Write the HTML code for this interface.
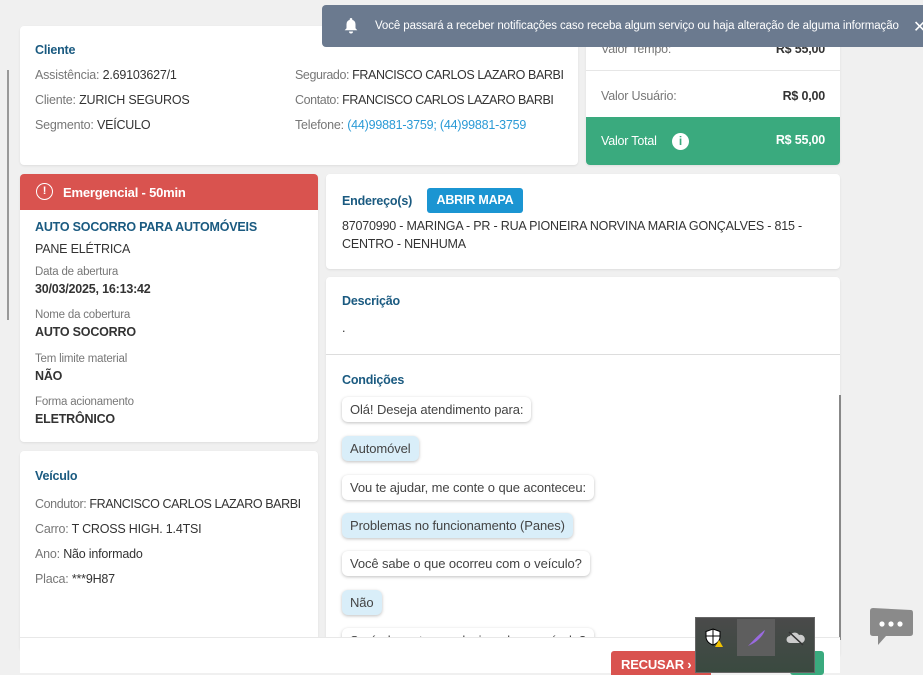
<!DOCTYPE html>
<html><head><meta charset="utf-8"><style>
*{box-sizing:border-box;margin:0;padding:0}
body{width:923px;height:673px;overflow:hidden;background:#f0f0f0;font-family:"Liberation Sans",sans-serif;font-size:12.5px;color:#444;position:relative;letter-spacing:-0.2px}
.card{position:absolute;background:#fff;border-radius:4px;box-shadow:0 1px 2px rgba(0,0,0,.08)}
.t{position:absolute;white-space:nowrap}
.h{color:#1a5a80;font-weight:bold;font-size:12.5px}
.lbl{color:#777}
.dark{color:#333}
.small{font-size:11.5px;color:#777}
.b{font-weight:bold;color:#333}
.bub{position:absolute;left:16px;padding:5px 8px;border-radius:6px;background:#fff;box-shadow:0 1px 3px rgba(0,0,0,.25);color:#444;white-space:nowrap;font-size:13px;letter-spacing:-0.1px}
.bub.u{background:#d9eef9}
</style></head><body>
<div style="position:absolute;left:7px;top:70px;width:2px;height:250px;background:#999"></div>

<div class="card" style="left:20px;top:26px;width:558px;height:139px">
 <div class="t h" style="left:15px;top:17px">Cliente</div>
 <div class="t" style="left:15px;top:42px"><span class="lbl">Assistência:</span> <span class="dark">2.69103627/1</span></div>
 <div class="t" style="left:15px;top:67px"><span class="lbl">Cliente:</span> <span class="dark">ZURICH SEGUROS</span></div>
 <div class="t" style="left:15px;top:92px"><span class="lbl">Segmento:</span> <span class="dark">VEÍCULO</span></div>
 <div class="t" style="left:275px;top:42px;letter-spacing:-0.4px"><span class="lbl">Segurado:</span> <span class="dark">FRANCISCO CARLOS LAZARO BARBI</span></div>
 <div class="t" style="left:275px;top:67px;letter-spacing:-0.4px"><span class="lbl">Contato:</span> <span class="dark">FRANCISCO CARLOS LAZARO BARBI</span></div>
 <div class="t" style="left:275px;top:92px"><span class="lbl">Telefone:</span> <span style="color:#2a9ad6">(44)99881-3759; (44)99881-3759</span></div>
</div>

<div class="card" style="left:586px;top:26px;width:254px;height:139px;overflow:hidden">
 <div class="t lbl" style="left:15px;top:16px">Valor Tempo:</div>
 <div class="t b" style="right:15px;top:16px">R$ 55,00</div>
 <div style="position:absolute;left:0;top:44px;width:100%;height:1px;background:#e6e6e6"></div>
 <div class="t lbl" style="left:15px;top:63px">Valor Usuário:</div>
 <div class="t b" style="right:15px;top:63px">R$ 0,00</div>
 <div style="position:absolute;left:0;top:91px;width:100%;height:48px;background:#3aaa7e"></div>
 <div class="t" style="left:15px;top:108px;color:#fff">Valor Total</div>
 <div style="position:absolute;left:86px;top:107px;width:17px;height:17px;border-radius:50%;background:#fff;color:#3aaa7e;font-weight:bold;font-size:12px;text-align:center;line-height:17px">i</div>
 <div class="t" style="right:15px;top:107px;color:#fff;font-weight:bold">R$ 55,00</div>
</div>

<div style="position:absolute;left:322px;top:5px;width:601px;height:42px;background:#6b7a8f;border-radius:4px 0 0 4px"></div>
<svg style="position:absolute;left:344px;top:17px" width="14" height="17" viewBox="0 0 14 17"><path d="M7 1a1.3 1.3 0 0 1 1.3 1.3v.6A4.5 4.5 0 0 1 11.5 7.3v4l1.8 2H.7l1.8-2v-4A4.5 4.5 0 0 1 5.7 2.9v-.6A1.3 1.3 0 0 1 7 1z M5 14.5h4a2 2 0 0 1-4 0z" fill="#fff"/></svg>
<div class="t" style="left:375px;top:20px;color:#fff;font-size:11.5px;letter-spacing:-0.1px">Você passará a receber notificações caso receba algum serviço ou haja alteração de alguma informação</div>
<div class="t" style="left:913px;top:17px;color:#fff;font-size:16px">✕</div>

<div class="card" style="left:20px;top:174px;width:298px;height:268px;overflow:hidden">
 <div style="position:absolute;left:0;top:0;width:100%;height:36px;background:#d9534f"></div>
 <div style="position:absolute;left:16px;top:9px;width:17px;height:17px;border:1.6px solid #fff;border-radius:50%;color:#fff;font-size:11px;font-weight:bold;text-align:center;line-height:14px">!</div>
 <div class="t" style="left:43px;top:11px;color:#fff;font-weight:bold;font-size:13px">Emergencial - 50min</div>
 <div class="t h" style="left:15px;top:46px">AUTO SOCORRO PARA AUTOMÓVEIS</div>
 <div class="t dark" style="left:15px;top:68px">PANE ELÉTRICA</div>
 <div class="t small" style="left:15px;top:92px">Data de abertura</div>
 <div class="t b" style="left:15px;top:108px">30/03/2025, 16:13:42</div>
 <div class="t small" style="left:15px;top:135px">Nome da cobertura</div>
 <div class="t b" style="left:15px;top:151px">AUTO SOCORRO</div>
 <div class="t small" style="left:15px;top:179px">Tem limite material</div>
 <div class="t b" style="left:15px;top:195px">NÃO</div>
 <div class="t small" style="left:15px;top:222px">Forma acionamento</div>
 <div class="t b" style="left:15px;top:238px">ELETRÔNICO</div>
</div>

<div class="card" style="left:20px;top:451px;width:298px;height:200px">
 <div class="t h" style="left:15px;top:18px">Veículo</div>
 <div class="t" style="left:15px;top:46px;letter-spacing:-0.4px"><span class="lbl">Condutor:</span> <span class="dark">FRANCISCO CARLOS LAZARO BARBI</span></div>
 <div class="t" style="left:15px;top:71px"><span class="lbl">Carro:</span> <span class="dark">T CROSS HIGH. 1.4TSI</span></div>
 <div class="t" style="left:15px;top:96px"><span class="lbl">Ano:</span> <span class="dark">Não informado</span></div>
 <div class="t" style="left:15px;top:121px"><span class="lbl">Placa:</span> <span class="dark">***9H87</span></div>
</div>

<div class="card" style="left:326px;top:174px;width:514px;height:95px">
 <div class="t h" style="left:16px;top:20px">Endereço(s)</div>
 <div style="position:absolute;left:101px;top:14px;width:96px;height:25px;background:#1b95d2;border-radius:3px;color:#fff;font-weight:bold;font-size:12.5px;text-align:center;line-height:25px">ABRIR MAPA</div>
 <div class="t dark" style="left:16px;top:45px">87070990 - MARINGA - PR - RUA PIONEIRA NORVINA MARIA GONÇALVES - 815 -</div>
 <div class="t dark" style="left:16px;top:63px">CENTRO - NENHUMA</div>
</div>

<div class="card" style="left:326px;top:277px;width:514px;height:380px;overflow:hidden">
 <div class="t h" style="left:16px;top:17px">Descrição</div>
 <div class="t dark" style="left:16px;top:44px">.</div>
 <div style="position:absolute;left:0;top:77px;width:100%;height:1px;background:#ddd"></div>
 <div class="t h" style="left:16px;top:96px">Condições</div>
 <div class="bub" style="top:120px">Olá! Deseja atendimento para:</div>
 <div class="bub u" style="top:159px">Automóvel</div>
 <div class="bub" style="top:198px">Vou te ajudar, me conte o que aconteceu:</div>
 <div class="bub u" style="top:236px">Problemas no funcionamento (Panes)</div>
 <div class="bub" style="top:274px">Você sabe o que ocorreu com o veículo?</div>
 <div class="bub u" style="top:313px">Não</div>
 <div class="bub" style="top:351px">Será algum tema relacionado ao veículo?</div>
</div>
<div style="position:absolute;left:839px;top:395px;width:2px;height:245px;background:#888"></div>

<div style="position:absolute;left:20px;top:637px;width:820px;height:36px;background:#fff;border-top:1px solid #e8e8e8"></div>
<div style="position:absolute;left:611px;top:651px;width:100px;height:24px;background:#d9534f;border-radius:3px 3px 0 0"></div>
<div class="t" style="left:621px;top:657px;color:#fff;font-weight:bold;font-size:13px">RECUSAR ›</div>
<div style="position:absolute;left:790px;top:651px;width:34px;height:24px;background:#3aaa7e;border-radius:3px"></div>

<div style="position:absolute;left:695px;top:617px;width:120px;height:56px;background:linear-gradient(#4a4a4a,#3a4a40);border:1px solid #666"></div>
<div style="position:absolute;left:737px;top:619px;width:38px;height:37px;background:#5e5e5e"></div>
<svg style="position:absolute;left:705px;top:628px" width="20" height="20" viewBox="0 0 20 20"><path d="M8 1l7 2.5v5c0 4-3 7-7 8.5C4 15.5 1 12.5 1 8.5v-5z" fill="#fff" stroke="#000" stroke-width="1"/><path d="M8 1v16M1 8h14" stroke="#000"/><path d="M14 12l4 7h-8z" fill="#f2c200"/></svg>
<svg style="position:absolute;left:745px;top:627px" width="22" height="22" viewBox="0 0 22 22"><path d="M3 19C8 14 14 7 20 3c-2 6-8 12-15 15z" fill="#9a6ae0"/></svg>
<svg style="position:absolute;left:786px;top:630px" width="20" height="16" viewBox="0 0 20 16"><path d="M4 13a3.5 3.5 0 0 1 0-7 5 5 0 0 1 9-1 4 4 0 0 1 3 8z" fill="#ccc"/><path d="M3 2l14 13" stroke="#333" stroke-width="1.5"/></svg>

<svg style="position:absolute;left:868px;top:607px" width="46" height="42" viewBox="0 0 46 42"><path d="M2 4q0-3 3-3l38 2q2 0 2 3v20q0 3-3 3H18l-8 9v-9H5q-3 0-3-3z" fill="#8a8a8a"/><circle cx="14" cy="17" r="2.6" fill="#fff"/><circle cx="23" cy="17" r="2.6" fill="#fff"/><circle cx="32" cy="17" r="2.6" fill="#fff"/></svg>
</body></html>
